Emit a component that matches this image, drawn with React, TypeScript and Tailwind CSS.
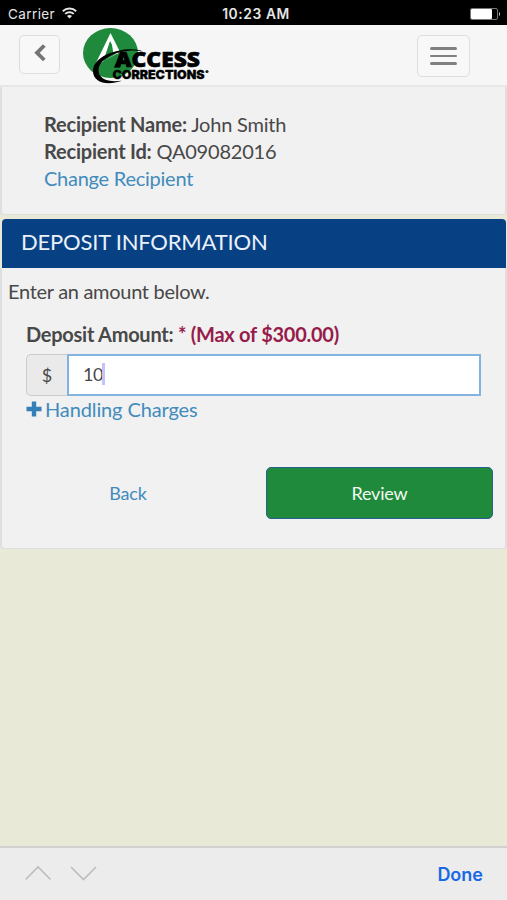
import { useState } from "react";

const StatusBar = () => (
    <div className="flex items-center justify-between h-[25px] pl-[8px] pr-[6px] pt-[3px] bg-black text-[#e6e6e6] font-['Inter','Liberation_Sans',sans-serif]">
        <div className="flex items-center w-[100px] text-[13.5px] tracking-[0.4px]">
            <span>Carrier</span>
            <svg className="ml-[7px] -mt-[2px] w-[15px] h-[12px]" viewBox="0 0 15 12" fill="none" stroke="#e6e6e6" strokeWidth="1.9">
                <path d="M0.8 4.2C4.5 0.6 10.5 0.6 14.2 4.2" />
                <path d="M3.2 6.9C5.6 4.6 9.4 4.6 11.8 6.9" />
                <path d="M7.5 11.5L5 9C6.4 7.7 8.6 7.7 10 9Z" fill="#e6e6e6" stroke="none" />
            </svg>
        </div>
        <div className="pl-[3px] text-[13.8px] font-semibold tracking-[0.6px]">10:23 AM</div>
        <div className="flex justify-end w-[100px]">
            <svg className="-mt-px w-[31px] h-[12px]" viewBox="0 0 31 12">
                <rect x="0.5" y="0.5" width="27" height="11" rx="1.5" fill="none" stroke="#777" />
                <rect x="1" y="1" width="21" height="10" rx="1" fill="#fff" />
                <path d="M29 4V8C30.3 7.6 30.3 4.4 29 4Z" fill="#ccc" />
            </svg>
        </div>
    </div>
);

const Logo = () => (
    <svg className="w-[130px] h-[60px]" viewBox="80 26 130 60" role="img" aria-label="Access Corrections">
        <ellipse cx="110.5" cy="53" rx="27.5" ry="25" fill="#1f8a3b" />
        <path d="M110.5 33L94 67L104 61L120 52Z" fill="#fff" />
        <path d="M110 41L103 62L117 53Z" fill="#1f8a3b" />
        <path d="M110.5 36L113.5 54H118Z" fill="#fff" />
        {/* swoosh: thin at the top right, heavy on the lower left */}
        <path d="M143 51.5C132 45 93 52 93 71C93 82 106 86.5 122 80.8C108 82.5 98.5 79 98.5 70C99 57 124 47.5 143 51.5Z" fill="#000" />
        <text x="115" y="67.3" textLength="85" lengthAdjust="spacingAndGlyphs" fill="#000" stroke="#000" strokeWidth="0.6" className="font-['Open_Sans',sans-serif] font-extrabold text-[20.5px]">ACCESS</text>
        <path d="M114 67.6L121.5 53H125L120 67.6Z" fill="#000" />
        <text x="112.5" y="79.3" textLength="92" lengthAdjust="spacingAndGlyphs" fill="#000" stroke="#000" strokeWidth="0.3" className="font-['Inter',sans-serif] font-black text-[12px]">CORRECTIONS</text>
        <circle cx="207" cy="71.5" r="1.6" fill="#222" />
    </svg>
);

const Navbar = () => (
    <div className="flex items-start h-[62px] bg-[#f6f6f6] border-b-2 border-[#e6e6e6] pl-[19px] pr-[37px]">
        <button className="flex items-center justify-center mt-[10px] w-[41px] h-[39px] rounded-[5px] border-[1.5px] border-[#dddddd] bg-[#f8f8f8]">
            <svg className="-mt-[3px] w-[12px] h-[18px]" viewBox="0 0 12 18" fill="none" stroke="#757575" strokeWidth="3.8">
                <path d="M10.3 1.5L3 8.8L10.3 16" />
            </svg>
        </button>
        <div className="ml-[20px] mt-px">
            <Logo />
        </div>
        <button className="flex flex-col items-center justify-center gap-[5px] ml-auto mt-[10px] w-[53px] h-[42px] rounded-[5px] border-[1.5px] border-[#dddddd] bg-[#f8f8f8]">
            <span className="w-[27px] h-[2.5px] rounded-sm bg-[#808080]"></span>
            <span className="w-[27px] h-[2.5px] rounded-sm bg-[#808080]"></span>
            <span className="w-[27px] h-[2.5px] rounded-sm bg-[#808080]"></span>
        </button>
    </div>
);

const Recipient = () => (
    <div className="h-[128px] pt-[24px] pl-[42px] bg-[#f1f1f1] border-x-2 border-b border-[#dfdfdf] rounded-b-[4px] text-[20px] leading-[27px]">
        <div className="tracking-[-0.21px]">
            <b>Recipient Name:</b> John Smith
        </div>
        <div className="tracking-[-0.21px]">
            <b>Recipient Id:</b> QA09082016
        </div>
        <a className="block tracking-[-0.25px] text-[#428bbd]">Change Recipient</a>
    </div>
);

const DepositForm = () => {
    const [amount, setAmount] = useState("10");

    return (
        <div className="mt-[4px]">
            <div className="ml-[2px] mr-px h-[49px] pl-[19px] bg-[#084183] rounded-t-[4px] text-[#eaf1fa] text-[22px] leading-[46px] tracking-[-0.2px]">
                DEPOSIT INFORMATION
            </div>
            <div className="h-[281px] pt-[9px] bg-[#f1f1f1] border-x-2 border-b border-[#dfdfdf] rounded-b-[4px]">
                <div className="pl-[6px] text-[20px] leading-[28px] tracking-[-0.3px]">Enter an amount below.</div>
                <div className="mt-[15px] pl-[24px] pr-[24px]">
                    <label className="block text-[20px] leading-[28px] font-bold tracking-[-0.26px]">
                        Deposit Amount: <span className="text-[#971c4b]">* (Max of $300.00)</span>
                    </label>
                    <div className="flex mt-[6px] h-[42px]">
                        <div className="flex items-center justify-center w-[41px] rounded-l-[5px] border border-r-0 border-[#cccccc] bg-[#eaeaea] text-[18px]">
                            $
                        </div>
                        <div className="flex items-center grow pl-[14px] border-2 border-[#82b4df] bg-white">
                            <input
                                className="w-[20px] -mt-px text-[18px] tracking-[-0.4px] outline-none"
                                value={amount}
                                onChange={(e) => setAmount(e.target.value)}
                            />
                            <span className="w-[3px] h-[22px] -ml-px -mt-[2px] bg-[#c4c2fa]"></span>
                        </div>
                    </div>
                    <a className="flex items-center -mt-px text-[20px] leading-[28px] tracking-[-0.12px] text-[#428bbd]">
                        <svg className="w-[16px] h-[16px] mr-[3px]" viewBox="0 0 16 16" fill="#337fb8">
                            <path d="M5.8 0.5H10.2V5.8H15.5V10.2H10.2V15.5H5.8V10.2H0.5V5.8H5.8Z" />
                        </svg>
                        Handling Charges
                    </a>
                </div>
                <div className="flex mt-[44px] pl-[12px] pr-[12px] text-[18px] tracking-[-0.2px]">
                    <button className="w-[228px] h-[52px] text-[#428bbd]">Back</button>
                    <button className="ml-auto w-[227px] h-[52px] rounded-[5px] border-[1.5px] border-[#286090] bg-[#1f8a3b] text-[#f2faf3]">
                        Review
                    </button>
                </div>
            </div>
        </div>
    );
};

const KeyboardBar = () => (
    <div className="flex items-center h-[54px] mt-auto pl-[25px] pr-[24px] border-t-2 border-[#d1d2d0] bg-[#ececec]">
        <svg className="-mt-[2px] w-[72px] h-[16px]" viewBox="0 0 72 16" fill="none" stroke="#bdbdbd" strokeWidth="1.6">
            <path d="M0.7 14.5L13 2L25.5 14.5" />
            <path d="M46 2L58.5 14.5L71 2" />
        </svg>
        <button className="ml-auto text-[18px] font-semibold text-[#1768e6] font-['Inter','Liberation_Sans',sans-serif]">
            Done
        </button>
    </div>
);

const App = () => {
    return (
        <div className="flex flex-col w-[507px] h-[900px] overflow-hidden bg-[#e8e9d7] text-[#484848] font-['Lato',sans-serif]">
            <StatusBar />
            <Navbar />
            <Recipient />
            <DepositForm />
            <KeyboardBar />
        </div>
    );
};

export default App;
